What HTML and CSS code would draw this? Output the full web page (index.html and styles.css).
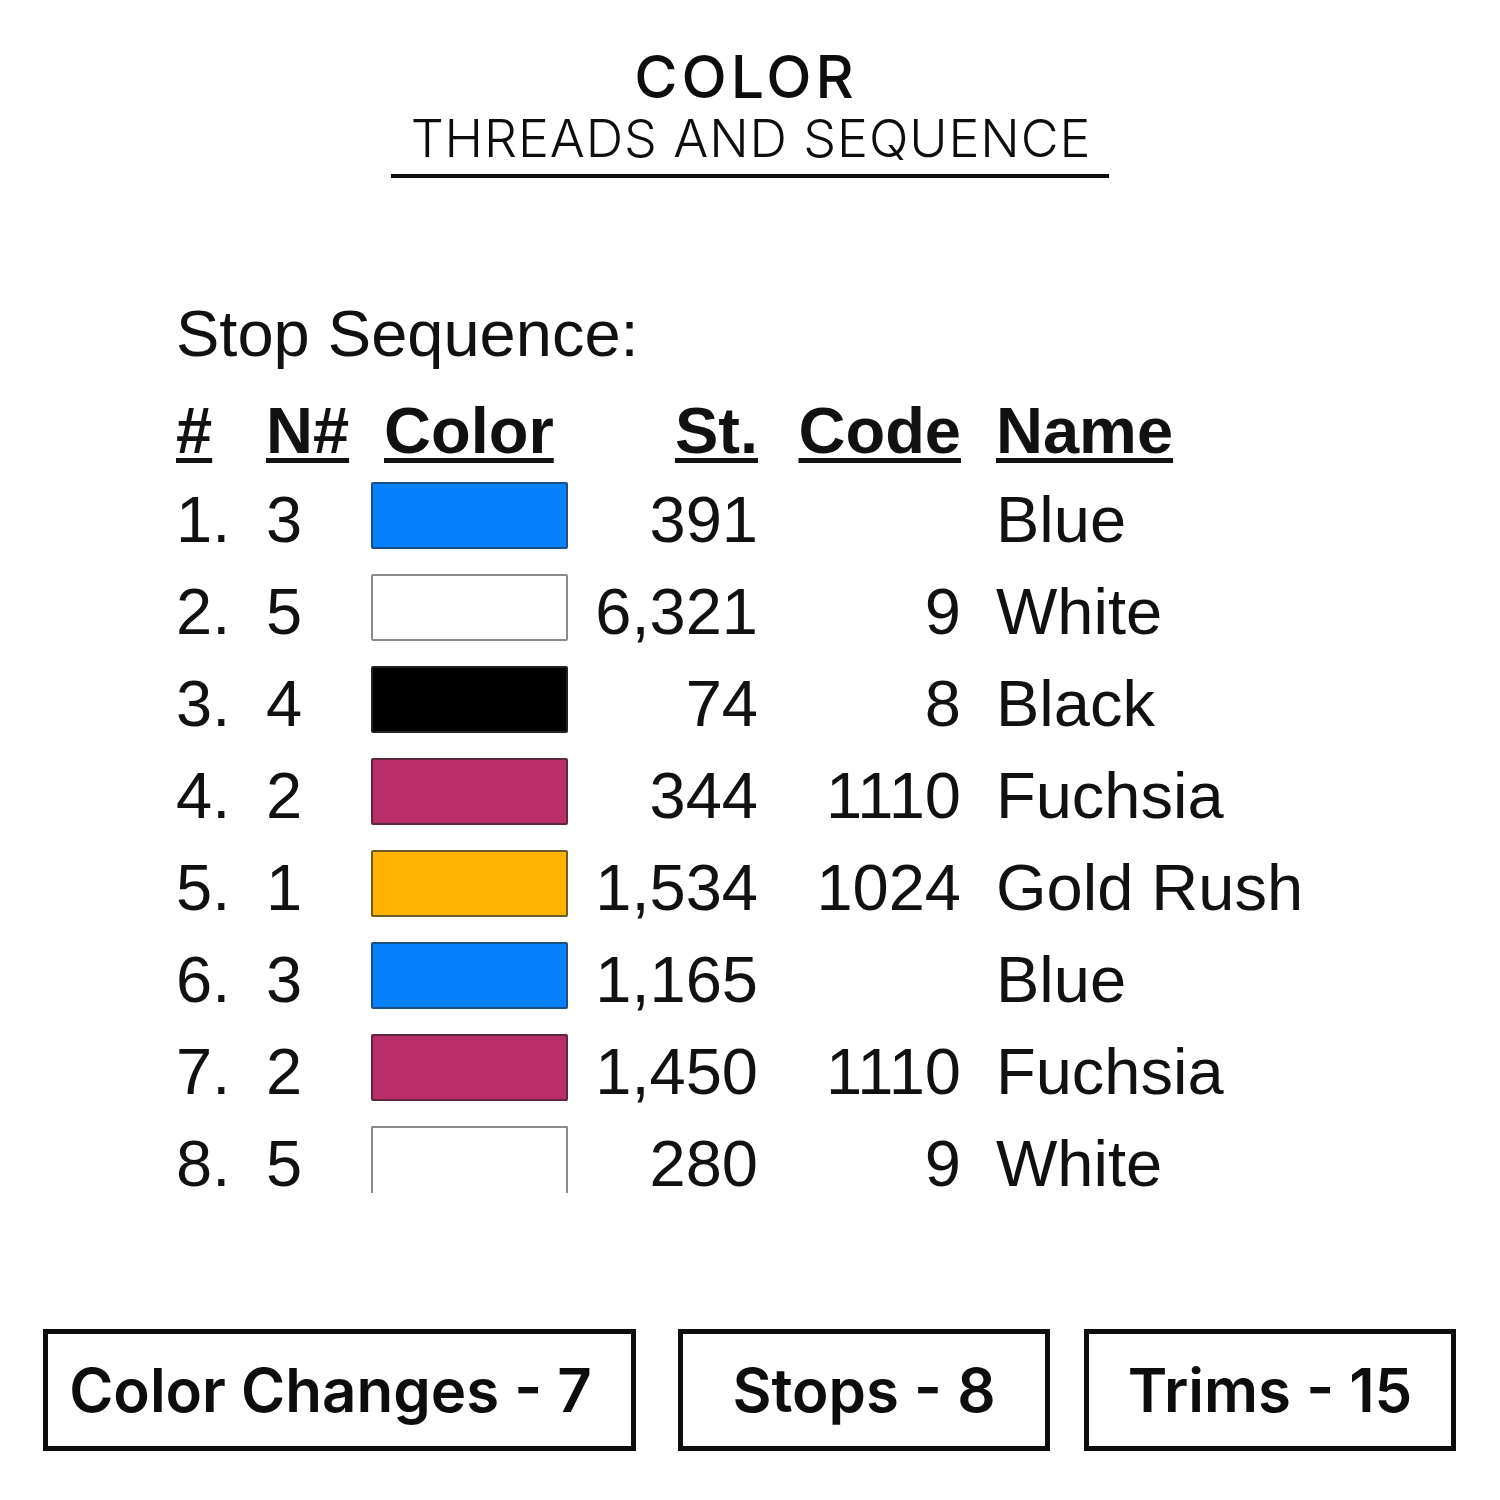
FILE: index.html
```html
<!DOCTYPE html>
<html lang="en">
<head>
<meta charset="utf-8">
<title>Color - Threads and Sequence</title>
<link rel="stylesheet" href="styles.css">
</head>
<body>
<div class="page">
  <header class="title">
    <div class="title-main">COLOR</div>
    <div class="title-sub">THREADS AND SEQUENCE</div>
  </header>

  <section class="sequence">
    <div class="seq-label">Stop Sequence:</div>
    <div class="seq-table">
      <div class="th">#</div>
      <div class="th">N#</div>
      <div class="th th-color">Color</div>
      <div class="th num">St.</div>
      <div class="th num">Code</div>
      <div class="th name">Name</div>

      <div class="td">1.</div><div class="td">3</div><div class="td"><span class="sw sw-blue"></span></div><div class="td num">391</div><div class="td num"></div><div class="td name">Blue</div>
      <div class="td">2.</div><div class="td">5</div><div class="td"><span class="sw sw-white"></span></div><div class="td num">6,321</div><div class="td num">9</div><div class="td name">White</div>
      <div class="td">3.</div><div class="td">4</div><div class="td"><span class="sw sw-black"></span></div><div class="td num">74</div><div class="td num">8</div><div class="td name">Black</div>
      <div class="td">4.</div><div class="td">2</div><div class="td"><span class="sw sw-fuchsia"></span></div><div class="td num">344</div><div class="td num">1110</div><div class="td name">Fuchsia</div>
      <div class="td">5.</div><div class="td">1</div><div class="td"><span class="sw sw-gold"></span></div><div class="td num">1,534</div><div class="td num">1024</div><div class="td name">Gold Rush</div>
      <div class="td">6.</div><div class="td">3</div><div class="td"><span class="sw sw-blue"></span></div><div class="td num">1,165</div><div class="td num"></div><div class="td name">Blue</div>
      <div class="td">7.</div><div class="td">2</div><div class="td"><span class="sw sw-fuchsia"></span></div><div class="td num">1,450</div><div class="td num">1110</div><div class="td name">Fuchsia</div>
      <div class="td">8.</div><div class="td">5</div><div class="td"><span class="sw sw-white sw-cut"></span></div><div class="td num">280</div><div class="td num">9</div><div class="td name">White</div>
    </div>
  </section>

  <section class="stats">
    <div class="stat stat-wide">Color Changes - 7</div>
    <div class="stat">Stops - 8</div>
    <div class="stat">Trims - 15</div>
  </section>
</div>
</body>
</html>
```

FILE: styles.css
```css
html, body {
  margin: 0;
  padding: 0;
  background: #ffffff;
}

.page {
  width: 1500px;
  height: 1500px;
  color: #111111;
}

/* Title */
.title {
  display: flex;
  flex-direction: column;
  align-items: center;
  padding-top: 47px;
}

.title-main {
  font-family: "Inter", "Open Sans", sans-serif;
  font-weight: 500;
  font-size: 59px;
  line-height: 59px;
  letter-spacing: 4px;
  padding-right: 8px;
  color: #0d0d0d;
}

.title-sub {
  font-family: "Inter", "Open Sans", sans-serif;
  font-weight: 300;
  font-size: 52px;
  line-height: 52px;
  letter-spacing: 0.9px;
  margin-top: 7px;
  padding: 0 18px 9px 20px;
  border-bottom: 4px solid #0d0d0d;
  color: #0d0d0d;
}

/* Sequence table */
.sequence {
  padding-left: 176px;
  margin-top: 110px;
  font-family: "Liberation Sans", Arial, sans-serif;
  font-size: 65px;
}

.seq-label {
  line-height: 92px;
  margin-bottom: 8px;
}

.seq-table {
  display: grid;
  grid-template-columns: 90px 105px 197px 190px 203px auto;
  grid-auto-rows: 92px;
  grid-template-rows: 86px;
}

.th {
  font-weight: 700;
  line-height: 86px;
  white-space: nowrap;
  text-decoration-line: underline;
  text-decoration-thickness: 5px;
  text-underline-offset: 5px;
}

.th-color {
  padding-left: 13px;
}

.td {
  line-height: 92px;
  white-space: nowrap;
}

.num {
  text-align: right;
}

.name {
  padding-left: 35px;
}

/* Swatches */
.sw {
  display: block;
  box-sizing: border-box;
  width: 197px;
  height: 67px;
  margin-top: 8px;
  border: 2px solid #4a4a4a;
  border-radius: 2px;
}

.sw-blue {
  background: #0582fb;
  border-color: #1d4f86;
}

.sw-white {
  background: #ffffff;
  border-color: #8a8a8a;
}

.sw-black {
  background: #000000;
  border-color: #222222;
}

.sw-fuchsia {
  background: #b92e68;
  border-color: #5e2740;
}

.sw-gold {
  background: #ffb200;
  border-color: #6d5a2c;
}

.sw-cut {
  border-bottom: none;
  border-radius: 2px 2px 0 0;
}

/* Stats boxes */
.stats {
  display: flex;
  padding-left: 43px;
  margin-top: 119px;
  gap: 34px;
}

.stat {
  box-sizing: border-box;
  width: 372px;
  height: 122px;
  border: 5px solid #0d0d0d;
  display: flex;
  align-items: center;
  justify-content: center;
  font-family: "Inter", "Open Sans", sans-serif;
  font-weight: 600;
  font-size: 60px;
  line-height: 1;
  color: #0d0d0d;
  white-space: nowrap;
}

.stat-wide {
  width: 593px;
  margin-right: 8px;
  padding-right: 18px;
}
```
